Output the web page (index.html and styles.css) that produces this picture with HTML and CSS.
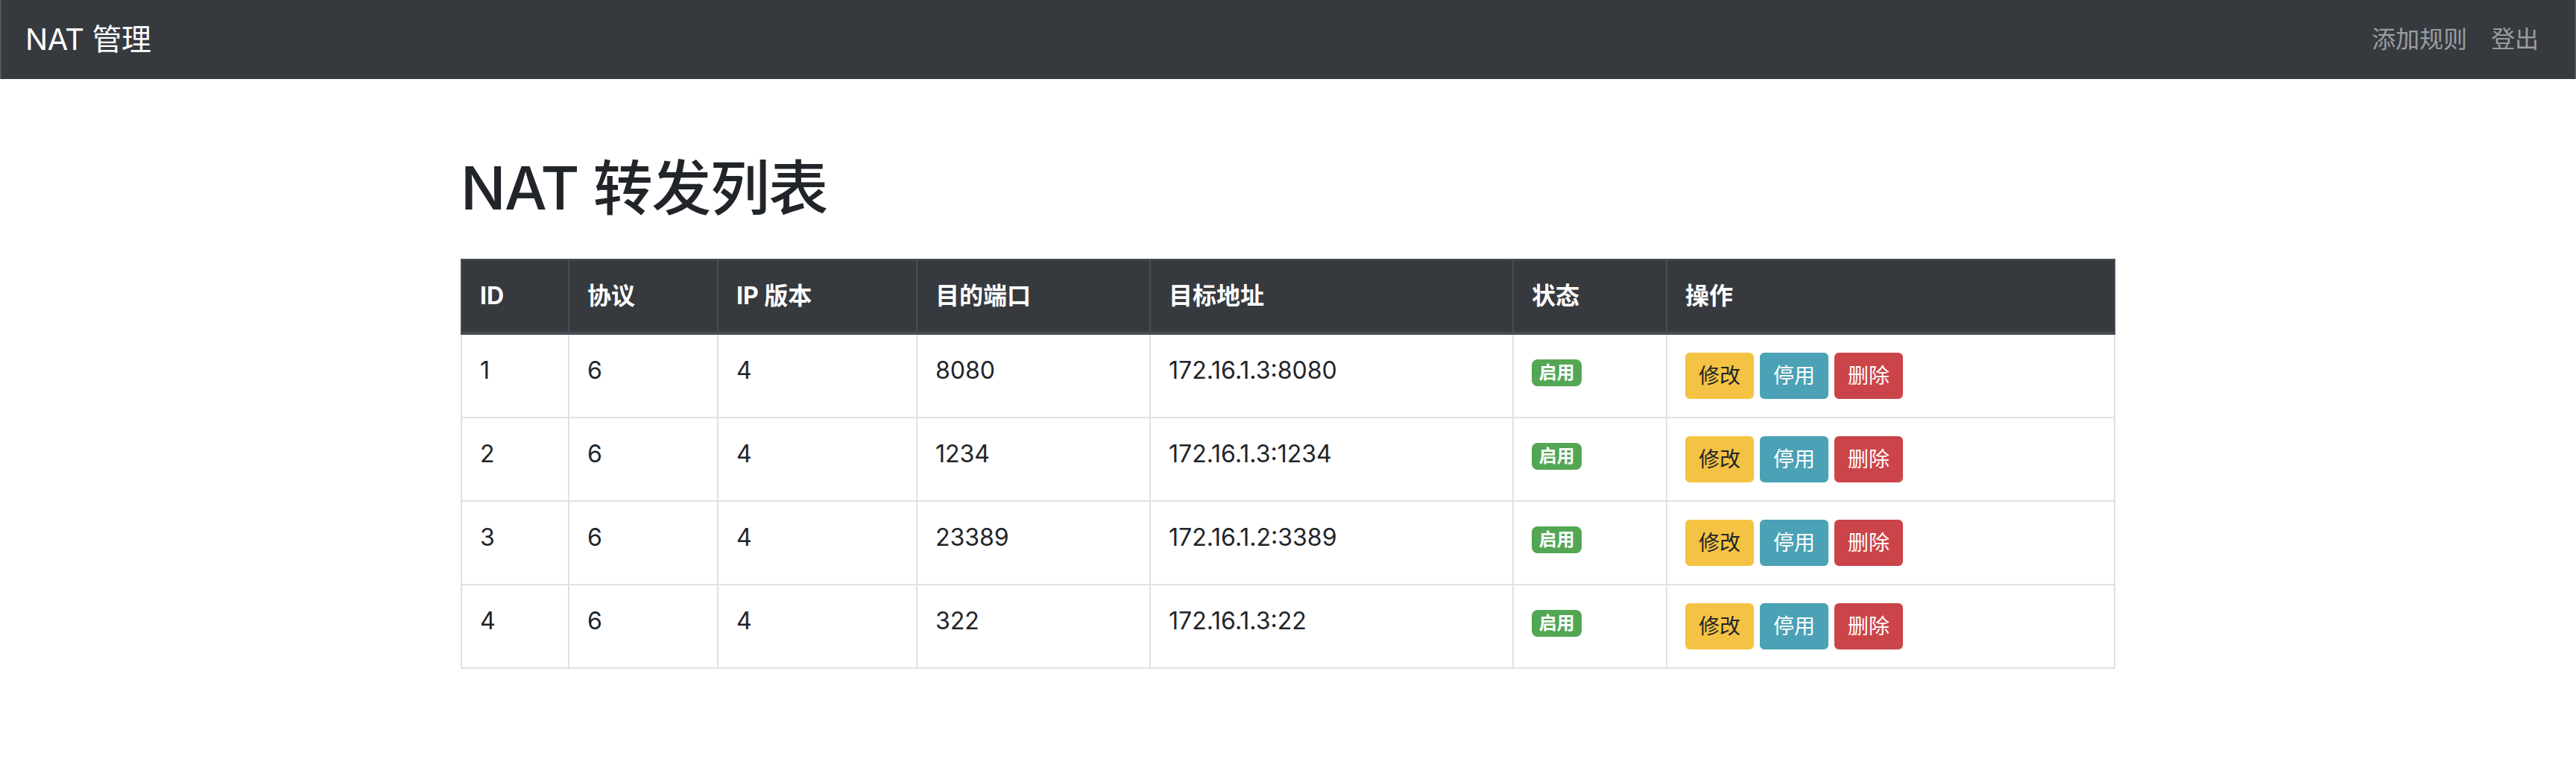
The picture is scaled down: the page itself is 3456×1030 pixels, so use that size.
FILE: index.html
```html
<!DOCTYPE html>
<html lang="zh-CN">
<head>
<meta charset="utf-8">
<title>NAT 管理</title>
<link rel="stylesheet" href="styles.css">
</head>
<body>
<nav class="navbar">
  <a class="brand" href="#">NAT 管理</a>
  <ul class="nav">
    <li><a class="nav-link" href="#">添加规则</a></li>
    <li><a class="nav-link" href="#">登出</a></li>
  </ul>
</nav>
<main class="container">
  <h1 class="title">NAT 转发列表</h1>
  <table class="table">
    <colgroup>
      <col class="c-id"><col class="c-proto"><col class="c-ipv"><col class="c-port"><col class="c-addr"><col class="c-state"><col class="c-ops">
    </colgroup>
    <thead>
      <tr><th>ID</th><th>协议</th><th>IP 版本</th><th>目的端口</th><th>目标地址</th><th>状态</th><th>操作</th></tr>
    </thead>
    <tbody>
      <tr><td>1</td><td>6</td><td>4</td><td>8080</td><td>172.16.1.3:8080</td><td><span class="badge">启用</span></td><td><div class="actions"><a class="btn btn-warning" href="#">修改</a><a class="btn btn-info" href="#">停用</a><a class="btn btn-danger" href="#">删除</a></div></td></tr>
      <tr><td>2</td><td>6</td><td>4</td><td>1234</td><td>172.16.1.3:1234</td><td><span class="badge">启用</span></td><td><div class="actions"><a class="btn btn-warning" href="#">修改</a><a class="btn btn-info" href="#">停用</a><a class="btn btn-danger" href="#">删除</a></div></td></tr>
      <tr><td>3</td><td>6</td><td>4</td><td>23389</td><td>172.16.1.2:3389</td><td><span class="badge">启用</span></td><td><div class="actions"><a class="btn btn-warning" href="#">修改</a><a class="btn btn-info" href="#">停用</a><a class="btn btn-danger" href="#">删除</a></div></td></tr>
      <tr><td>4</td><td>6</td><td>4</td><td>322</td><td>172.16.1.3:22</td><td><span class="badge">启用</span></td><td><div class="actions"><a class="btn btn-warning" href="#">修改</a><a class="btn btn-info" href="#">停用</a><a class="btn btn-danger" href="#">删除</a></div></td></tr>
    </tbody>
  </table>
</main>
</body>
</html>
```
FILE: styles.css
```css
* { box-sizing: border-box; }
html, body { margin: 0; padding: 0; }
body {
  font-family: Inter, "Noto Sans CJK SC", sans-serif;
  font-size: 32px;
  line-height: 48px;
  color: #212529;
  background: #fff;
}
a { text-decoration: none; }

.navbar {
  display: flex;
  align-items: center;
  justify-content: space-between;
  height: 106px;
  padding: 0 32px;
  background: #363a3f;
  border-left: 2px solid #50545a;
  border-right: 2px solid #50545a;
}
.brand {
  color: #fff;
  font-size: 40px;
  line-height: 60px;
  letter-spacing: -0.5px;
}
.nav {
  display: flex;
  list-style: none;
  margin: 0;
  padding: 0;
}
.nav-link {
  display: block;
  padding: 0 16px;
  color: rgba(255, 255, 255, 0.5);
  font-size: 32px;
  line-height: 48px;
}

.container {
  width: 2220px;
  margin: 0 auto;
  padding-top: 98px;
}
.title {
  margin: 0 0 47px;
  font-size: 80px;
  line-height: 96px;
  font-weight: 500;
  letter-spacing: -1.5px;
}

.table {
  width: 100%;
  border-collapse: collapse;
  table-layout: fixed;
  border: 2px solid #dee2e6;
}
.c-id { width: 144px; }
.c-proto { width: 200px; }
.c-ipv { width: 267px; }
.c-port { width: 313px; }
.c-addr { width: 487px; }
.c-state { width: 206px; }
.table th, .table td {
  padding: 24px;
  text-align: left;
  vertical-align: top;
  border: 2px solid #dee2e6;
}
.table thead th {
  background: #363a3f;
  color: #fff;
  font-weight: 700;
  border-color: #454d55;
  border-bottom-width: 4px;
}

.badge {
  display: inline-block;
  font-size: 24px;
  font-weight: 700;
  line-height: 1;
  padding: 6px 9.6px;
  color: #fff;
  background: #53a653;
  border-radius: 8px;
}

.actions {
  display: flex;
  gap: 8px;
}
.btn {
  display: inline-block;
  font-size: 28px;
  line-height: 42px;
  padding: 8px 16px;
  border: 2px solid transparent;
  border-radius: 6px;
  color: #fff;
}
.btn-warning { background: #f5c343; border-color: #f5c343; color: #212529; }
.btn-info { background: #4ba1b5; border-color: #4ba1b5; }
.btn-danger { background: #cb4449; border-color: #cb4449; }
```
